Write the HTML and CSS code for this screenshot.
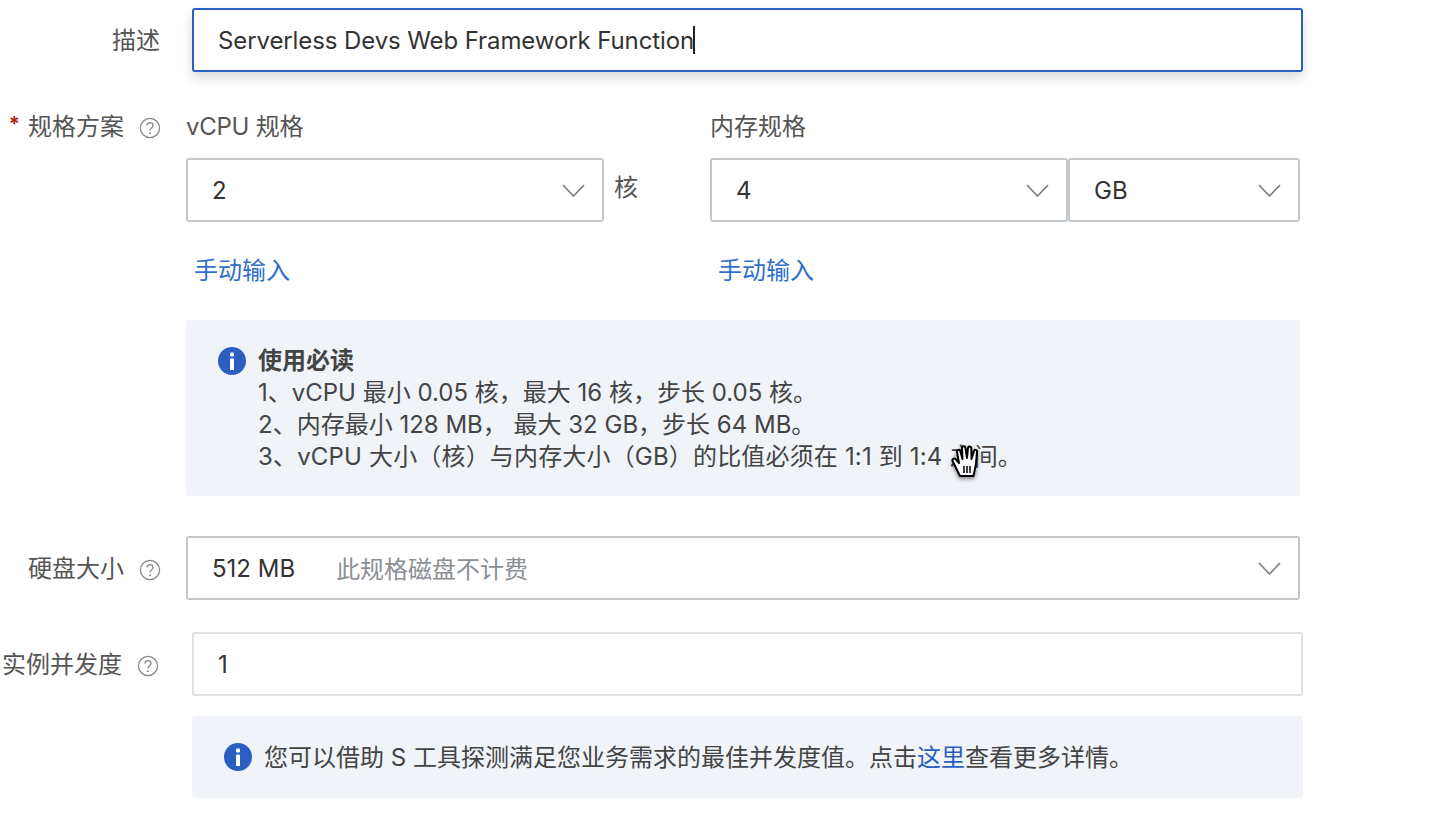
FILE: index.html
```html
<!DOCTYPE html>
<html lang="zh-CN">
<head>
<meta charset="utf-8">
<title>函数配置</title>
<link rel="stylesheet" href="styles.css">
</head>
<body>
<form class="form">
  <div class="row row-desc">
    <div class="label label-wide">描述</div>
    <div class="field field-focus"><span class="value value-desc">Serverless Devs Web Framework Function</span><span class="caret"></span></div>
  </div>

  <div class="row row-spec">
    <div class="label label-narrow"><span class="req">*</span>规格方案<svg class="help" viewBox="0 0 22 22"><circle cx="11" cy="11" r="9.6"/><path d="M8 8.6c0-1.8 1.3-3 3-3s3 1.1 3 2.8c0 2.500-3 2.600-3 5"/><circle class="dot" cx="11" cy="16.200" r="1"/></svg></div>
    <div class="spec-body">
      <div class="spec-cols">
        <div class="col-cpu">
          <div class="sub-label sub-label-cpu">vCPU 规格</div>
          <div class="select-line">
            <div class="select select-cpu"><span class="value">2</span><svg class="chev" viewBox="0 0 23 13"><path d="M1 1l10.500 11L22 1"/></svg></div>
            <span class="unit">核</span>
          </div>
          <a class="link">手动输入</a>
        </div>
        <div class="col-mem">
          <div class="sub-label">内存规格</div>
          <div class="select-line">
            <div class="select select-mem"><span class="value">4</span><svg class="chev" viewBox="0 0 23 13"><path d="M1 1l10.500 11L22 1"/></svg></div>
            <div class="select select-unit"><span class="value">GB</span><svg class="chev" viewBox="0 0 23 13"><path d="M1 1l10.500 11L22 1"/></svg></div>
          </div>
          <a class="link">手动输入</a>
        </div>
      </div>
      <div class="notice notice-big">
        <svg class="info" viewBox="0 0 28 28"><circle cx="14" cy="14" r="14"/><rect x="12" y="5.500" width="4" height="4" rx="1"/><rect x="12" y="11.500" width="4" height="11.500" rx=".6"/></svg>
        <div class="notice-text">
          <div class="notice-title">使用必读</div>
          <div>1、vCPU 最小 0.05 核，最大 16 核，步长 0.05 核。</div>
          <div>2、内存最小 128 MB， 最大 32 GB，步长 64 MB。</div>
          <div class="notice-wide">3、vCPU 大小（核）与内存大小（GB）的比值必须在 1:1 到 1:4 之间。</div>
        </div>
      </div>
    </div>
  </div>

  <div class="row row-disk">
    <div class="label label-narrow label-disk">硬盘大小<svg class="help" viewBox="0 0 22 22"><circle cx="11" cy="11" r="9.6"/><path d="M8 8.6c0-1.8 1.3-3 3-3s3 1.1 3 2.8c0 2.500-3 2.600-3 5"/><circle class="dot" cx="11" cy="16.200" r="1"/></svg></div>
    <div class="select select-disk"><span class="value">512 MB</span><span class="hint">此规格磁盘不计费</span><svg class="chev" viewBox="0 0 23 13"><path d="M1 1l10.500 11L22 1"/></svg></div>
  </div>

  <div class="row row-conc">
    <div class="label label-conc">实例并发度<svg class="help" viewBox="0 0 22 22"><circle cx="11" cy="11" r="9.6"/><path d="M8 8.6c0-1.8 1.3-3 3-3s3 1.1 3 2.8c0 2.500-3 2.600-3 5"/><circle class="dot" cx="11" cy="16.200" r="1"/></svg></div>
    <div class="conc-body">
      <div class="field field-plain"><span class="value">1</span></div>
      <div class="notice notice-small">
        <svg class="info" viewBox="0 0 28 28"><circle cx="14" cy="14" r="14"/><rect x="12" y="5.500" width="4" height="4" rx="1"/><rect x="12" y="11.500" width="4" height="11.500" rx=".6"/></svg>
        <div class="notice-line">您可以借助 S 工具探测满足您业务需求的最佳并发度值。点击<a class="inline-link">这里</a>查看更多详情。</div>
      </div>
    </div>
  </div>
</form>
<svg class="hand" viewBox="0 0 32 38">
  <path d="M10 33L3 19c-1.500-2 .5-4.500 2.500-3L9 20 7 9c-.4-2.200 2.600-3 3.300-.8L12.500 16 12 5c0-2.300 3-2.500 3.400-.2L17 15l1-10c.2-2.200 3.200-2 3.300.2L21.500 16 24 8c.6-2 3.400-1.200 3 .9L26 20c-.5 4-1.500 8-2.500 13z" class="hand-fill"/>
  <path d="M14 23v7M17 23v7M20 23v7" class="hand-line"/>
</svg>
</body>
</html>
```
FILE: styles.css
```css
* { box-sizing: border-box; }
html, body { margin: 0; padding: 0; background: #fff; }
body {
  position: relative;
  width: 1432px;
  height: 840px;
  overflow: hidden;
  font-family: Inter, "Noto Sans CJK SC", sans-serif;
  font-size: 24px;
  color: #333;
}
.form { display: block; padding-top: 8px; }
.row { display: flex; align-items: flex-start; }

.label { display: flex; align-items: center; justify-content: flex-end; color: #555; line-height: 32px; white-space: nowrap; }
.label-wide { width: 160px; height: 64px; margin-right: 32px; padding-top: 2px; }
.label-narrow { width: 161px; margin-right: 25px; }
.label-disk { padding-top: 2px; }
.req { color: #b8221c; font-size: 20px; margin-right: 8px; margin-bottom: 6px; font-weight: 700; }
.help { width: 22px; height: 22px; margin: 2px 0 0 15px; flex: none; fill: none; stroke: #888; stroke-width: 1.300; }
.help .dot { fill: #888; stroke: none; }

.field {
  display: flex; align-items: center;
  width: 1111px; height: 64px;
  padding: 0 24px;
  border-radius: 3px;
  background: #fff;
}
.field-focus { border: 2px solid #2a5fc1; box-shadow: 0 6px 12px rgba(0, 0, 0, .14); }
.field-plain { border: 2px solid #dfe1e4; }
.value { color: #333; white-space: nowrap; }
.value-desc { letter-spacing: -.1px; }
.caret { display: inline-block; width: 2px; height: 28px; background: #222; margin-left: -1px; flex: none; }

.row-spec { margin-top: 39px; }
.row-spec .label-narrow { height: 32px; }
.spec-body { width: 1114px; }
.spec-cols { display: flex; }
.col-cpu { width: 524px; }
.sub-label { height: 32px; line-height: 32px; color: #555; margin-bottom: 15px; }
.sub-label-cpu { letter-spacing: -.25px; }
.select-line { display: flex; align-items: center; }

.select {
  display: flex; align-items: center; justify-content: space-between;
  height: 64px;
  padding: 0 17px 0 24px;
  border: 2px solid #c3c8cd;
  border-radius: 3px;
  background: #fff;
}
.select-cpu { width: 418px; }
.select-mem { width: 358px; }
.select-unit { width: 232px; }
.select-disk { width: 1114px; }
.chev { width: 23px; height: 13px; fill: none; stroke: #808488; stroke-width: 1.800; flex: none; }
.unit { margin: 0 0 4px 10px; color: #555; line-height: 60px; }
.link { display: block; margin: 33px 0 0 8px; color: #2f6fca; line-height: 32px; height: 32px; }

.notice { background: #f0f3f8; border-radius: 4px; }
.notice-big { display: flex; margin-top: 33px; height: 176px; padding: 26px 32px; }
.notice-big .info { margin-top: 1px; }
.info { width: 28px; height: 28px; flex: none; fill: #2a5fc1; }
.info rect { fill: #fff; }
.notice-text { margin-left: 12px; line-height: 32px; color: #444; }
.notice-title { font-weight: 700; line-height: 29px; margin-bottom: 2px; color: #444; }
.notice-wide { letter-spacing: .17px; }

.row-disk { margin-top: 40px; align-items: center; }
.select-disk { justify-content: flex-start; }
.hint { margin: 0 0 2px 41px; color: #8b8f94; }
.select-disk .chev { margin-left: auto; }

.row-conc { margin-top: 32px; }
.label-conc { width: 159px; height: 64px; margin-right: 33px; padding-top: 2px; }
.notice-small { display: flex; align-items: center; margin-top: 20px; width: 1111px; height: 82px; padding: 0 32px; }
.notice-line { margin: 0 0 4px 12px; color: #444; white-space: nowrap; }
.inline-link { color: #2a5fc1; }

.hand { position: absolute; left: 950px; top: 443px; width: 32px; height: 38px; filter: drop-shadow(0 2px 2px rgba(0,0,0,.45)); }
.hand-fill { fill: #fff; stroke: #000; stroke-width: 2; stroke-linejoin: round; }
.hand-line { fill: none; stroke: #000; stroke-width: 1.500; }
```
